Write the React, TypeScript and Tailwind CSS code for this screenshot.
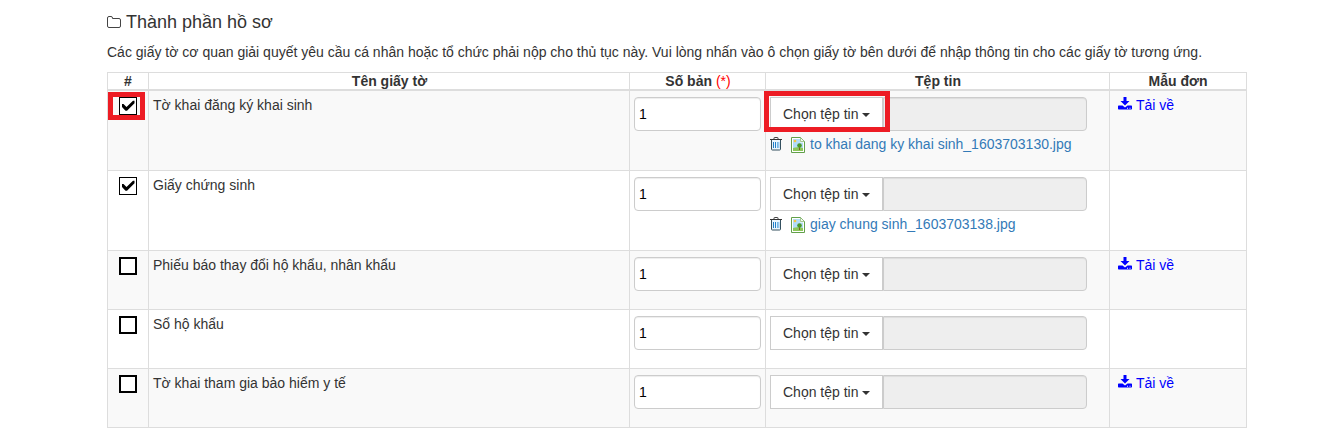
import React from "react";

type Paper = {
  name: string;
  copies: string;
  checked?: boolean;
  file?: string;
  hasForm?: boolean;
  highlighted?: boolean;
};

const papers: Paper[] = [
  {
    name: "Tờ khai đăng ký khai sinh",
    copies: "1",
    checked: true,
    file: "to khai dang ky khai sinh_1603703130.jpg",
    hasForm: true,
    highlighted: true,
  },
  { name: "Giấy chứng sinh", copies: "1", checked: true, file: "giay chung sinh_1603703138.jpg" },
  { name: "Phiếu báo thay đổi hộ khẩu, nhân khẩu", copies: "1", hasForm: true },
  { name: "Sổ hộ khẩu", copies: "1" },
  { name: "Tờ khai tham gia bảo hiểm y tế", copies: "1", hasForm: true },
];

const FolderIcon = () => (
  <svg width="14" height="12" viewBox="0 0 14 12" fill="none" stroke="#444" aria-hidden="true">
    <path d="M.5 10V2Q.5.5 2 .5h2Q5.500.5 5.500 2v.5H12q1.500 0 1.500 1.500v6q0 1.500-1.500 1.500H2Q.5 11.500.5 10z" />
  </svg>
);

const DownloadIcon = () => (
  <svg width="14" height="13" viewBox="0 0 14 13" fill="currentColor" aria-hidden="true">
    <path d="M5.500 0h3v4h3L7 8.500 2.500 4h3z" />
    <path
      fillRule="evenodd"
      d="M.7 8.500h3.800L7 10.500l2.500-2h3.800q.7 0 .7.7v2.600q0 .7-.7.7H.7q-.7 0-.7-.7V9.200q0-.7.7-.7zM9 10.700v1h1v-1zM11.500 10.700v1h1v-1z"
    />
  </svg>
);

const TrashIcon = () => (
  <svg width="12" height="14" viewBox="0 0 12 14" fill="none" aria-hidden="true">
    <path d="M4 2.500V1q0-.5.5-.5h3q.5 0 .5.5v1.500" stroke="#444" />
    <path d="M0 2.500h12" stroke="#333" />
    <path d="M1.500 3v9.200q0 .8.8.8h7.400q.8 0 .8-.8V3" fill="#eaf5fd" stroke="#34505f" />
    <path d="M3.500 5v6M5.500 5v6" stroke="#1f7fc8" />
    <path d="M7.500 5v6M8.800 5v6" stroke="#64aee3" strokeWidth=".9" />
  </svg>
);

const ImageIcon = () => (
  <svg width="14" height="16" viewBox="0 0 14 16" aria-hidden="true">
    <path d="M.5.5h9l4 4v11H.5z" fill="#fff" stroke="#62a04a" />
    <path d="M2 2h7v3.500h3V11H2z" fill="#b3dcf8" />
    <path d="M2 11q4-1.500 10 0v3H2z" fill="#8cc65a" />
    <circle cx="4" cy="4" r="1.300" fill="#f8c53c" />
    <path d="M9.500.5v4h4z" fill="#f5faf2" stroke="#7fb26a" strokeWidth=".7" />
    <path d="M8.500 9.500V13" stroke="#805a2a" />
    <circle cx="8.500" cy="8.500" r="2.300" fill="#4b9a26" />
  </svg>
);

const CheckBox = ({ checked }: { checked?: boolean }) =>
  checked ? (
    <span role="checkbox" aria-checked="true" className="block size-[18px] border border-black bg-white">
      <svg width="16" height="16" viewBox="0 0 16 16" aria-hidden="true">
        <path d="M2 6h1.500L6.500 9 13 2.700h1.500v2.500L7 12.700H5.500L2 9z" fill="#000" />
      </svg>
    </span>
  ) : (
    <span role="checkbox" aria-checked="false" className="block size-[18px] border-2 border-black bg-white" />
  );

const FilePicker = ({ paper }: { paper: Paper }) => (
  <div className="relative h-full pt-1.5 pl-1">
    <div className="flex h-[34px] w-[317px]">
      <button
        type="button"
        className="flex w-[113px] items-center border border-[#ccc] bg-white pl-3 text-[#333]"
      >
        Chọn tệp tin
        <span className="mt-0.5 ml-[3px] border-x-4 border-t-4 border-x-transparent border-t-[#333]" />
      </button>
      <div className="flex-1 rounded-r border border-[#ccc] bg-[#eee] shadow-[inset_0_1px_1px_rgba(0,0,0,0.075)]" />
    </div>
    {paper.file && (
      <div className="flex h-[26px] items-center text-[#337ab7]">
        <TrashIcon />
        <span className="mt-px ml-[9px]">
          <ImageIcon />
        </span>
        <span className="ml-[5px]">{paper.file}</span>
      </div>
    )}
    {paper.highlighted && (
      <div className="absolute top-0 -left-0.5 h-[41px] w-[126px] border-5 border-[#ed1c24]" />
    )}
  </div>
);

const PaperRow = ({ paper }: { paper: Paper }) => (
  <div
    className={`grid grid-cols-[41px_481px_136px_344px_137px] border-b border-[#ddd] odd:bg-white even:bg-[#f9f9f9] ${
      paper.file ? "h-20" : "h-[59px]"
    }`}
  >
    <div className="relative border-r border-[#ddd] pt-1.5 pl-[11px]">
      <CheckBox checked={paper.checked} />
      {paper.highlighted && (
        <div className="absolute top-px left-0 h-7 w-[37px] border-5 border-[#ed1c24]" />
      )}
    </div>
    <div className="border-r border-[#ddd] pt-1 pl-1">{paper.name}</div>
    <div className="border-r border-[#ddd] pt-1.5 pl-1">
      <input
        readOnly
        value={paper.copies}
        className="block h-[34px] w-[127px] rounded border border-[#ccc] bg-white px-1 text-black shadow-[inset_0_1px_1px_rgba(0,0,0,0.075)]"
      />
    </div>
    <div className="border-r border-[#ddd]">
      <FilePicker paper={paper} />
    </div>
    <div className="border-r border-[#ddd] pt-1 pl-2">
      {paper.hasForm && (
        <a className="flex items-center gap-1 text-[#00f]">
          <span className="pb-[3px]">
            <DownloadIcon />
          </span>
          Tải về
        </a>
      )}
    </div>
  </div>
);

export default function App() {
  return (
    <main className="h-[437px] overflow-hidden bg-white pl-[107px] font-['Liberation_Sans',Arial,sans-serif] text-sm leading-5 text-[#333]">
      <div className="w-[1140px]">
        <h4 className="flex h-[42px] items-center gap-[5px] pt-0.5 text-lg leading-5">
          <FolderIcon />
          Thành phần hồ sơ
        </h4>
        <p className="h-[30px]">
          Các giấy tờ cơ quan giải quyết yêu cầu cá nhân hoặc tổ chức phải nộp cho thủ tục này. Vui lòng nhấn vào ô
          chọn giấy tờ bên dưới để nhập thông tin cho các giấy tờ tương ứng.
        </p>

        <div className="border-t border-l border-[#ddd]">
          <div className="grid h-[18px] grid-cols-[41px_481px_136px_344px_137px] border-b-2 border-[#ddd] text-center leading-4 font-bold">
            <div className="border-r border-[#ddd]">#</div>
            <div className="border-r border-[#ddd] pl-px">Tên giấy tờ</div>
            <div className="border-r border-[#ddd] pl-px">
              Số bản <span className="font-normal text-[#f00]">(*)</span>
            </div>
            <div className="border-r border-[#ddd] pl-px">Tệp tin</div>
            <div className="border-r border-[#ddd]">Mẫu đơn</div>
          </div>
          {papers.map((paper) => (
            <PaperRow key={paper.name} paper={paper} />
          ))}
        </div>
      </div>
    </main>
  );
}
